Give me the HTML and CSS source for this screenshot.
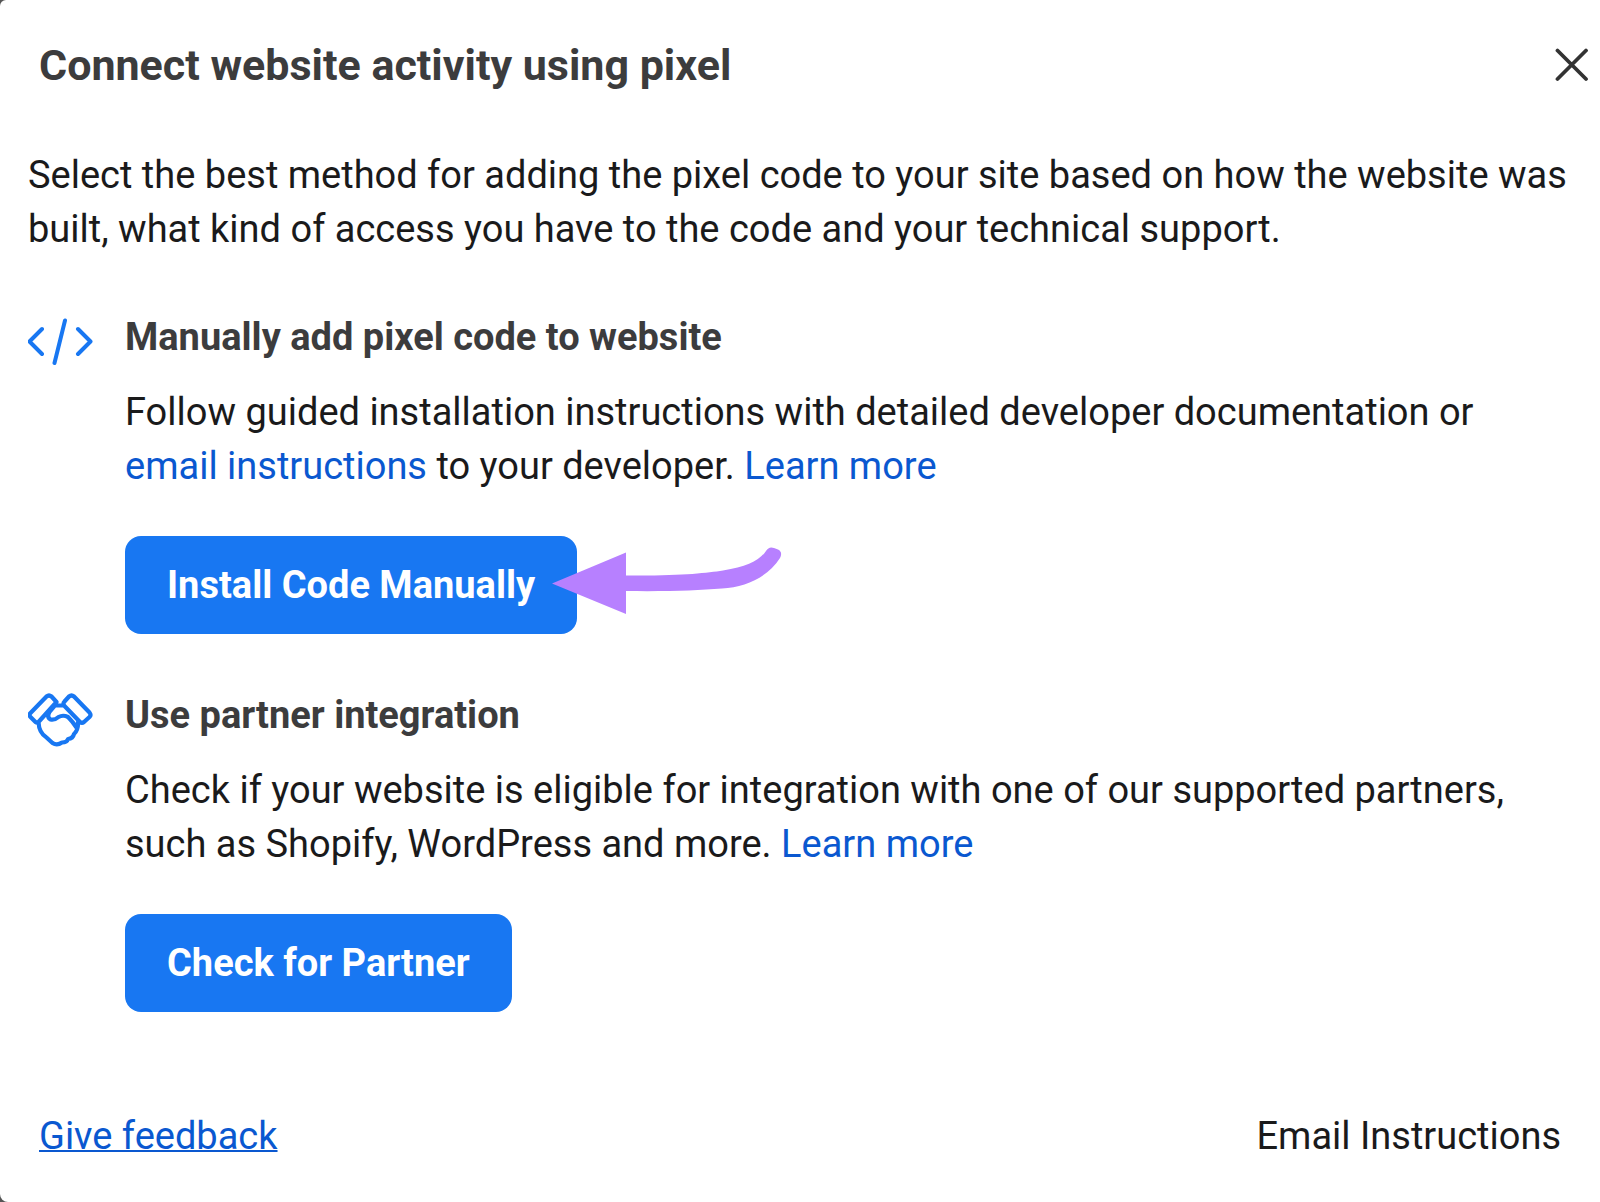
FILE: index.html
```html
<!DOCTYPE html>
<html lang="en">
<head>
<meta charset="utf-8">
<meta name="viewport" content="width=device-width, initial-scale=1">
<title>Connect website activity using pixel</title>
<link rel="stylesheet" href="styles.css">
</head>
<body>
<main class="dialog" role="dialog" aria-labelledby="dialog-title">
  <header class="dialog-header">
    <h1 class="dialog-title" id="dialog-title">Connect website activity using pixel</h1>
    <button class="close-button" type="button" aria-label="Close">
      <svg width="34" height="34" viewBox="0 0 34 34" fill="none" stroke="#333" stroke-width="3.8" stroke-linecap="round"><path d="M2.500 2.500l28.500 28.500M31 2.500L2.500 31"/></svg>
    </button>
  </header>

  <div class="dialog-body">
    <p class="intro">Select the best method for adding the pixel code to your site based on how the website was built, what kind of access you have to the code and your technical support.</p>

    <section class="method">
      <svg class="method-icon" viewBox="0 0 66 66" fill="none" stroke="#1877f2" stroke-width="4" stroke-linecap="round" stroke-linejoin="round"><path d="M14 19L1.500 31.500 14 44M50 19L62.500 31.500 50 44M37 10.500L26.500 53"/></svg>
      <div class="method-content">
        <h2 class="method-title">Manually add pixel code to website</h2>
        <p class="method-text">Follow guided installation instructions with detailed developer documentation or <a class="link" href="#email">email instructions</a> to your developer. <a class="link" href="#learn-manual">Learn more</a></p>
        <div class="action">
          <button class="primary-button" type="button">Install Code Manually</button>
          <svg class="pointer-arrow" viewBox="0 0 230 64" fill="#b780ff" aria-hidden="true"><path d="M0 31.500L74 .500V23.500C130 24 154 21 171 18.500C195 15 208 8 214 -1Q217 -6 222 -4L226 -2.500Q231 0 228 6C216 25 194 35 170 36.500C145 38.500 118 39.500 74 39V62Z"/></svg>
        </div>
      </div>
    </section>

    <section class="method">
      <svg class="method-icon" viewBox="0 0 66 66" fill="none" stroke="#1877f2" stroke-width="4.2" stroke-linecap="round" stroke-linejoin="round"><path d="M2.500 25L18.500 8.500Q21 6.500 23.500 8.500L28.500 14L10.500 34Q9 35 7.500 34L2.500 29Q.500 27 2.500 25ZM36.500 13.500L41 8.500Q43.500 6.500 46 8.500L61.500 24.500Q63.500 27 61.500 29L56 34Q54 35.500 52 34L36.500 18Q34.500 15.500 36.500 13.500ZM27 17.500H36M27 17.500L21.500 24Q18.500 29 22.500 31.500Q26.500 32.500 30.500 29Q35 26.500 40 29Q45 34 48.500 39.500M10.500 34Q11 45 18.500 49.500L24.500 55Q29 58 34 54.500Q39 54.500 40 51Q45 50.500 46 46Q50.500 42 50 34"/></svg>
      <div class="method-content">
        <h2 class="method-title">Use partner integration</h2>
        <p class="method-text">Check if your website is eligible for integration with one of our supported partners, such as Shopify, WordPress and more. <a class="link" href="#learn-partner">Learn more</a></p>
        <div class="action">
          <button class="primary-button" type="button">Check for Partner</button>
        </div>
      </div>
    </section>
  </div>

  <footer class="dialog-footer">
    <a class="link feedback-link" href="#feedback">Give feedback</a>
    <button class="text-button" type="button">Email Instructions</button>
  </footer>
</main>
</body>
</html>
```
FILE: styles.css
```css
* {
  box-sizing: border-box;
}

body {
  margin: 0;
  background: #555;
  color: #1a1a1b;
  font-family: Roboto, "Liberation Sans", sans-serif;
  font-size: 38px;
  line-height: 54px;
}

h1,
h2,
p {
  margin: 0;
}

button {
  padding: 0;
  border: 0;
  background: none;
  color: inherit;
  font: inherit;
  cursor: pointer;
}

.dialog {
  min-height: 100vh;
  padding: 38px 28px;
  border-radius: 6px 0 0 8px;
  background: #fff;
}

.dialog-header {
  display: flex;
  align-items: center;
  justify-content: space-between;
  margin-right: -17px;
  padding-left: 11px;
}

.dialog-title {
  color: #3c3c3d;
  font-size: 43px;
  font-weight: 700;
}

.close-button,
.close-button svg {
  display: block;
}

.intro {
  margin-top: 56px;
}

.method {
  display: flex;
  gap: 31px;
  margin-top: 54px;
}

.method-icon {
  flex: none;
  width: 66px;
  height: 66px;
}

.method-content {
  flex: 1;
}

.method-title {
  color: #3c3c3d;
  font-size: 38px;
  font-weight: 700;
}

.method-text {
  margin-top: 21px;
}

.link {
  color: #0a58d0;
  text-decoration: none;
}

.action {
  position: relative;
  width: fit-content;
  margin-top: 43px;
}

.primary-button {
  display: block;
  padding: 22px 42px;
  border-radius: 16px;
  background: #1877f2;
  color: #fff;
  font-weight: 700;
}

.pointer-arrow {
  position: absolute;
  top: 16px;
  left: calc(100% - 25px);
  width: 230px;
  height: 64px;
  overflow: visible;
}

.dialog-footer {
  display: flex;
  justify-content: space-between;
  margin-top: 97px;
  padding: 0 11px;
}

.feedback-link {
  text-decoration: underline;
  text-decoration-thickness: 2px;
}
```
